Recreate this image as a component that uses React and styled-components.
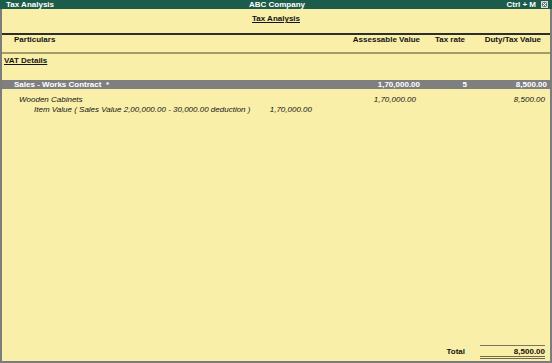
import styled, { createGlobalStyle } from "styled-components";

const GlobalStyle = createGlobalStyle`
  html, body {
    margin: 0;
    padding: 0;
    background: #f9efa9;
  }
  body {
    font-family: "Liberation Sans", Arial, sans-serif;
    font-size: 8px;
    color: #141414;
  }
`;

const Screen = styled.div`
  width: 552px;
  height: 363px;
  display: flex;
  flex-direction: column;
  background: #f9efa9;
  overflow: hidden;
`;

const TitleBar = styled.div`
  height: 9px;
  line-height: 9px;
  background: #1b5c4b;
  color: #ffffff;
  font-weight: bold;
  display: grid;
  grid-template-columns: 1fr auto 1fr;
  padding: 0 4px 0 6px;
`;

const TitleRight = styled.div`
  display: flex;
  justify-content: flex-end;
  align-items: center;
  gap: 5px;
`;

const CloseBox = styled.span`
  width: 7px;
  height: 7px;
  display: flex;
  border: 1px solid #d8d8d8;
  background: #6a7d76;
  box-sizing: border-box;
`;

const Body = styled.div`
  flex: 1;
  display: flex;
  flex-direction: column;
  border-left: 2px solid #7c7c7c;
  border-right: 2px solid #7c7c7c;
  border-bottom: 2px solid #7c7c7c;
`;

const Heading = styled.div`
  margin: 5px 0 9px;
  line-height: 10px;
  text-align: center;
  font-weight: bold;

  span {
    text-decoration: underline;
  }
`;

const Cols = styled.div`
  display: grid;
  grid-template-columns: 1fr 80px 45px 80px;
  padding-right: 5px;
  line-height: ${(p) => p.$h || 10}px;
`;

const HeaderRow = styled(Cols)`
  border-top: 2px solid #2e2e2a;
  border-bottom: 2px solid #a39c64;
  padding-bottom: 7px;
  font-weight: bold;
`;

const Cell = styled.div`
  text-align: ${(p) => (p.$left ? "left" : "right")};
  padding-left: ${(p) => p.$indent || 0}px;
  padding-right: ${(p) => p.$pr || 0}px;
  white-space: pre;
`;

const Section = styled.div`
  margin: 2px 0 14px 2px;
  line-height: 10px;
  font-weight: bold;
  text-decoration: underline;
`;

const HighlightRow = styled(Cols)`
  background: #7f7f7f;
  color: #ffffff;
  font-weight: bold;
  margin-bottom: 6px;
  padding-right: 3px;
`;

const ItemRow = styled(Cols)`
  font-style: italic;
`;

const SubLine = styled.div`
  display: grid;
  grid-template-columns: 1fr auto;
  padding-left: 32px;
  padding-right: 28px;
  white-space: pre;
`;

const Spacer = styled.div`
  flex: 1;
`;

const TotalRow = styled(Cols)`
  font-weight: bold;
  margin-bottom: 2px;
  align-items: center;
`;

const TotalValue = styled.div`
  margin-left: 15px;
  text-align: right;
  line-height: 9px;
  border-top: 1px solid #7a7464;
  border-bottom: 3px double #6e6a52;
  padding: 1px 0 0;
`;

export default function App() {
  return (
    <>
      <GlobalStyle />
      <Screen>
        <TitleBar>
          <div>Tax Analysis</div>
          <div>ABC Company</div>
          <TitleRight>
            <span>Ctrl + M</span>
            <CloseBox>
              <svg width="5" height="5" viewBox="0 0 5 5">
                <path d="M0.5 0.5 L4.5 4.5 M4.5 0.5 L0.5 4.5" stroke="#ffffff" strokeWidth="1" />
              </svg>
            </CloseBox>
          </TitleRight>
        </TitleBar>
        <Body>
          <Heading>
            <span>Tax Analysis</span>
          </Heading>
          <HeaderRow>
            <Cell $left $indent={12}>Particulars</Cell>
            <Cell>Assessable Value</Cell>
            <Cell>Tax rate</Cell>
            <Cell $pr={4}>Duty/Tax Value</Cell>
          </HeaderRow>
          <Section>VAT Details</Section>
          <HighlightRow $h={9}>
            <Cell $left $indent={12}>{"Sales - Works Contract  *"}</Cell>
            <Cell $pr={2}>1,70,000.00</Cell>
            <Cell>5</Cell>
            <Cell>8,500.00</Cell>
          </HighlightRow>
          <ItemRow>
            <Cell $left $indent={17}>Wooden Cabinets</Cell>
            <Cell $pr={4}>1,70,000.00</Cell>
            <Cell />
            <Cell>8,500.00</Cell>
          </ItemRow>
          <ItemRow>
            <SubLine>
              <span>Item Value ( Sales Value 2,00,000.00 - 30,000.00 deduction )</span>
              <span>1,70,000.00</span>
            </SubLine>
            <Cell />
            <Cell />
            <Cell />
          </ItemRow>
          <Spacer />
          <TotalRow>
            <Cell />
            <Cell />
            <Cell $pr={-3}>Total</Cell>
            <TotalValue>8,500.00</TotalValue>
          </TotalRow>
        </Body>
      </Screen>
    </>
  );
}
